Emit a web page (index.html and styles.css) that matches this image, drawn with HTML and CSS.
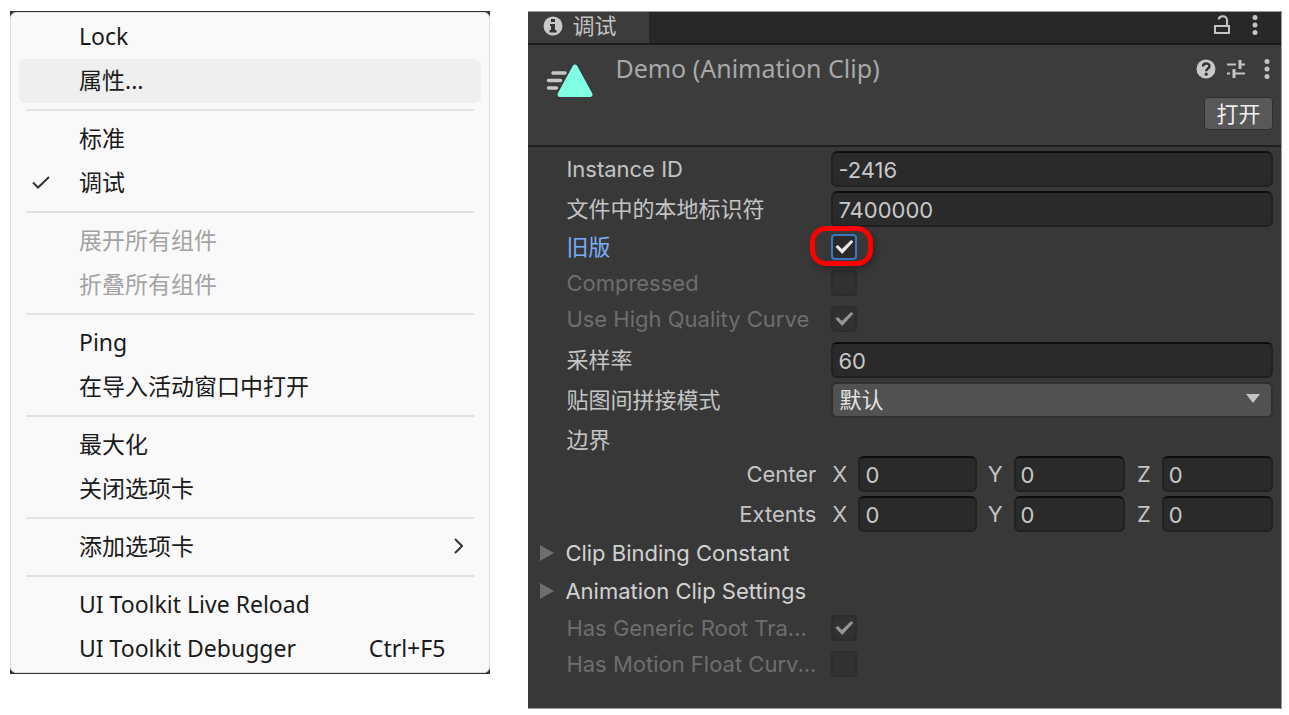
FILE: index.html
```html
<!DOCTYPE html>
<html lang="zh-CN">
<head>
  <meta charset="UTF-8">
  <title>Animation Clip Inspector</title>
  <link rel="stylesheet" href="styles.css">
</head>
<body>

  <!-- Context menu -->
  <div class="menu-frame">
    <div class="menu" role="menu">
      <button class="menu-item" role="menuitem">Lock</button>
      <button class="menu-item active" role="menuitem">属性...</button>
      <hr>
      <button class="menu-item" role="menuitem">标准</button>
      <button class="menu-item" role="menuitem">
        <svg class="tick" viewBox="0 0 18 13" width="18" height="13"><path d="M1 6.500l5 5L17 1"/></svg>
        调试
      </button>
      <hr>
      <button class="menu-item" role="menuitem" disabled>展开所有组件</button>
      <button class="menu-item" role="menuitem" disabled>折叠所有组件</button>
      <hr>
      <button class="menu-item" role="menuitem">Ping</button>
      <button class="menu-item" role="menuitem">在导入活动窗口中打开</button>
      <hr>
      <button class="menu-item" role="menuitem">最大化</button>
      <button class="menu-item" role="menuitem">关闭选项卡</button>
      <hr>
      <button class="menu-item" role="menuitem">
        添加选项卡
        <svg class="arrow" viewBox="0 0 9 16" width="9" height="16"><path d="M1 1l7 7-7 7"/></svg>
      </button>
      <hr>
      <button class="menu-item" role="menuitem">UI Toolkit Live Reload</button>
      <button class="menu-item" role="menuitem">UI Toolkit Debugger <span class="shortcut">Ctrl+F5</span></button>
    </div>
  </div>

  <!-- Inspector -->
  <div class="inspector">
    <div class="tabbar">
      <div class="tab">
        <svg viewBox="0 0 20 20" width="20" height="20">
          <circle cx="10" cy="10" r="9.5" fill="#c8c8c8"/>
          <path d="M8 3h4v3H8zM7 8h5v6h1.500v2.500h-7V14H8v-4H7z" fill="#333"/>
        </svg>
        <span>调试</span>
      </div>
      <div class="tab-icons">
        <button class="icon-btn" aria-label="Lock">
          <svg viewBox="0 0 16 20" width="16" height="20">
            <path d="M1 11h14v7H1zM4.500 4.500C5.500 0 12.500 0 13 5v6" fill="none" stroke="#c4c4c4" stroke-width="2"/>
          </svg>
        </button>
        <button class="icon-btn" aria-label="Menu">
          <svg viewBox="0 0 6 20" width="6" height="20" fill="#c4c4c4"><circle cx="3" cy="2.500" r="2.500"/><circle cx="3" cy="10" r="2.500"/><circle cx="3" cy="17.500" r="2.500"/></svg>
        </button>
      </div>
    </div>

    <div class="header">
      <svg class="clip-icon" viewBox="0 0 48 36" width="48" height="36">
        <path d="M15 10h12M10.500 17.500h12M10.500 25h8" transform="translate(-8 0)" stroke="#c8c8c8" stroke-width="3.500" stroke-linecap="round"/>
        <path d="M29 4L44 31.500H14z" fill="#383838" stroke="#383838" stroke-width="8" stroke-linejoin="round"/>
        <path d="M29 4L44 31.500H14z" fill="#80ffe4" stroke="#80ffe4" stroke-width="5" stroke-linejoin="round"/>
      </svg>
      <h1>Demo (Animation Clip)</h1>
      <div class="header-side">
        <div class="header-icons">
          <button class="icon-btn" aria-label="Help">
            <svg viewBox="0 0 20 20" width="20" height="20">
              <circle cx="10" cy="10" r="9.500" fill="#c8c8c8"/>
              <path d="M7 7.500C7 3.500 13.500 3.500 13.500 7.200C13.500 9.500 10.200 9.500 10.200 12.200" fill="none" stroke="#333" stroke-width="2.400"/>
              <circle cx="10.200" cy="15.200" r="1.600" fill="#333"/>
            </svg>
          </button>
          <button class="icon-btn" aria-label="Presets">
            <svg viewBox="0 0 20 20" width="20" height="20" fill="#c4c4c4">
              <path d="M1 4.500h9v2H1zM12.500 1h3v9h-3zM15 4.500h4v2h-4zM1 13.500h3v2H1zM6.500 10h3v9h-3zM9 13.500h10v2H9z"/>
            </svg>
          </button>
          <button class="icon-btn" aria-label="More">
            <svg viewBox="0 0 6 20" width="6" height="20" fill="#c4c4c4"><circle cx="3" cy="2.500" r="2.500"/><circle cx="3" cy="10" r="2.500"/><circle cx="3" cy="17.500" r="2.500"/></svg>
          </button>
        </div>
        <button class="open-btn">打开</button>
      </div>
    </div>

    <div class="fields">
      <div class="row">
        <label for="instance">Instance ID</label>
        <input type="text" id="instance" value="-2416">
      </div>
      <div class="row">
        <label for="localid">文件中的本地标识符</label>
        <input type="text" id="localid" value="7400000">
      </div>

      <div class="checks">
        <div class="row check focused">
          <label for="legacy">旧版</label>
          <span class="marked"><input type="checkbox" id="legacy" checked></span>
        </div>
        <div class="row check">
          <label for="compressed">Compressed</label>
          <input type="checkbox" id="compressed" disabled>
        </div>
        <div class="row check">
          <label for="quality">Use High Quality Curve</label>
          <input type="checkbox" id="quality" checked disabled>
        </div>
      </div>

      <div class="row">
        <label for="rate">采样率</label>
        <input type="text" id="rate" value="60">
      </div>
      <div class="row">
        <label for="wrap">贴图间拼接模式</label>
        <div class="select">
          <select id="wrap"><option>默认</option></select>
          <svg viewBox="0 0 14 9" width="14" height="9"><path d="M0 0h14L7 9z" fill="#c4c4c4"/></svg>
        </div>
      </div>

      <div class="group-title">边界</div>
      <div class="row vector">
        <span class="name">Center</span>
        <div class="axes">
          <label for="cx">X</label><input type="text" id="cx" value="0">
          <label for="cy">Y</label><input type="text" id="cy" value="0">
          <label for="cz">Z</label><input type="text" id="cz" value="0">
        </div>
      </div>
      <div class="row vector">
        <span class="name">Extents</span>
        <div class="axes">
          <label for="ex">X</label><input type="text" id="ex" value="0">
          <label for="ey">Y</label><input type="text" id="ey" value="0">
          <label for="ez">Z</label><input type="text" id="ez" value="0">
        </div>
      </div>

      <button class="foldout">
        <svg viewBox="0 0 14 16" width="14" height="16"><path d="M0 0l14 8-14 8z" fill="#6e6e6e"/></svg>
        Clip Binding Constant
      </button>
      <button class="foldout">
        <svg viewBox="0 0 14 16" width="14" height="16"><path d="M0 0l14 8-14 8z" fill="#6e6e6e"/></svg>
        Animation Clip Settings
      </button>

      <div class="row check">
        <label for="generic">Has Generic Root Tra...</label>
        <input type="checkbox" id="generic" checked disabled>
      </div>
      <div class="row check">
        <label for="motion">Has Motion Float Curv...</label>
        <input type="checkbox" id="motion" disabled>
      </div>
    </div>
  </div>

</body>
</html>
```
FILE: styles.css
```css
*,
*::before,
*::after {
  box-sizing: border-box;
}
body {
  margin: 0;
  padding: 11px 7px 7px 10px;
  background: #fff;
  display: grid;
  grid-template-columns: 480fr 753fr;
  gap: 38px;
  align-items: start;
  font-family: Inter, "Noto Sans CJK SC", sans-serif;
  font-size: 22px;
  line-height: 28px;
}
button {
  font: inherit;
  color: inherit;
  background: none;
  border: none;
  padding: 0;
}
svg {
  display: block;
  flex: none;
}

/* Context menu */
.menu-frame {
  background: #333;
  padding: 1px 0;
}
.menu {
  background: #f9f9f9;
  border: 1px solid #ddd;
  border-radius: 6px;
  padding: 2px 8px 1px;
  font-family: "Noto Sans", "Noto Sans CJK SC", sans-serif;
  font-size: 23px;
  color: #1a1a1a;
}
.menu-item {
  position: relative;
  display: flex;
  align-items: center;
  width: 100%;
  height: 44px;
  padding: 0 36px 2px 60px;
  border-radius: 6px;
  text-align: left;
}
.menu-item.active {
  background: #efefef;
}
.menu-item:disabled {
  color: #a3a3a3;
}
.menu hr {
  height: 2px;
  margin: 6px 7px;
  border: none;
  background: #e2e2e2;
}
.menu svg {
  fill: none;
  stroke: #333;
  stroke-width: 2;
}
.tick {
  position: absolute;
  left: 13px;
}
.arrow {
  position: absolute;
  right: 18px;
}
.shortcut {
  margin-left: auto;
}

/* Inspector */
.inspector {
  background: #383838;
  border: 1px solid #999;
  border-left: none;
  color: #c4c4c4;
  padding-bottom: 26px;
}
.tabbar {
  display: flex;
  justify-content: space-between;
  height: 33px;
  background: #282828;
  border-bottom: 2px solid #1c1c1c;
}
.tab {
  display: flex;
  align-items: center;
  gap: 9px;
  width: 121px;
  padding: 0 0 3px 15px;
  background: #3c3c3c;
}
.tab-icons {
  display: flex;
  align-items: center;
  gap: 22px;
  padding: 0 23px 6px 0;
}
.header {
  display: flex;
  height: 102px;
  background: #3c3c3c;
  border-bottom: 2px solid #1f1f1f;
}
.clip-icon {
  margin: 18px 0 0 18px;
}
.header h1 {
  flex: 1;
  margin: 5px 0 0 21px;
  font: 25px/36px "Noto Sans", sans-serif;
  color: #a8a8a8;
}
.header-side {
  display: flex;
  flex-direction: column;
  align-items: flex-end;
  gap: 18px;
  padding: 14px 8px 0 0;
}
.header-icons {
  display: flex;
  gap: 10px;
}
.header-icons .icon-btn:last-child {
  margin: 0 3px 0 8px;
}
.open-btn {
  width: 69px;
  height: 33px;
  background: #585858;
  border: 1px solid #303030;
  border-radius: 4px;
  color: #eee;
}

/* Property rows */
.fields {
  padding: 2px 8px 0 0;
}
.row {
  display: grid;
  grid-template-columns: 303px 1fr;
  align-items: center;
  height: 40px;
}
.row > label {
  padding-left: 38px;
  white-space: nowrap;
}
input[type="text"],
select {
  width: 100%;
  min-width: 0;
  height: 36px;
  margin: 0;
  padding: 2px 5px 0;
  font: inherit;
  color: #c8c8c8;
  background: #2a2a2a;
  border: 2px solid #212121;
  border-top-color: #0d0d0d;
  border-radius: 6px;
}
.select {
  position: relative;
}
select {
  display: block;
  appearance: none;
  background: #515151;
  border-color: #303030;
  color: #e4e4e4;
  padding: 0 6px;
}
.select svg {
  position: absolute;
  right: 13px;
  top: 12px;
}

/* Checkboxes */
.checks {
  padding-bottom: 3px;
}
.row.check {
  height: 36px;
}
.row.check label {
  color: #6e6e6e;
}
.row.check.focused label {
  color: #7baefa;
}
input[type="checkbox"] {
  appearance: none;
  display: grid;
  place-items: center;
  width: 26px;
  height: 26px;
  margin: 0;
  background: #2a2a2a;
  border: 2px solid #3a79bb;
  border-radius: 4px;
}
input[type="checkbox"]:checked::before {
  content: "";
  width: 18px;
  height: 14px;
  background: #e8e8e8;
  clip-path: polygon(0 48%, 14% 36%, 36% 64%, 88% 0, 100% 12%, 38% 100%);
}
input[type="checkbox"]:disabled {
  background: #313131;
  border-color: #2d2d2d;
}
input[type="checkbox"]:disabled::before {
  background: #949494;
}
.marked {
  position: relative;
}
.marked::after {
  content: "";
  position: absolute;
  left: -21px;
  top: -8px;
  width: 63px;
  height: 40px;
  border: 5px solid #fe0000;
  border-radius: 16px;
  box-shadow: 2px 3px 6px rgba(0, 0, 0, 0.3);
}

/* Bounds */
.group-title {
  height: 34px;
  line-height: 40px;
  padding-left: 38px;
}
.name {
  padding-right: 15px;
  text-align: right;
}
.axes {
  display: grid;
  grid-template-columns: 27px 118fr 37px 111fr 37px 111fr;
  align-items: center;
}
.axes label {
  padding-right: 11px;
  text-align: right;
}

.foldout {
  display: flex;
  align-items: center;
  gap: 11px;
  width: 100%;
  height: 38px;
  padding-left: 12px;
  color: #d2d2d2;
}
```
